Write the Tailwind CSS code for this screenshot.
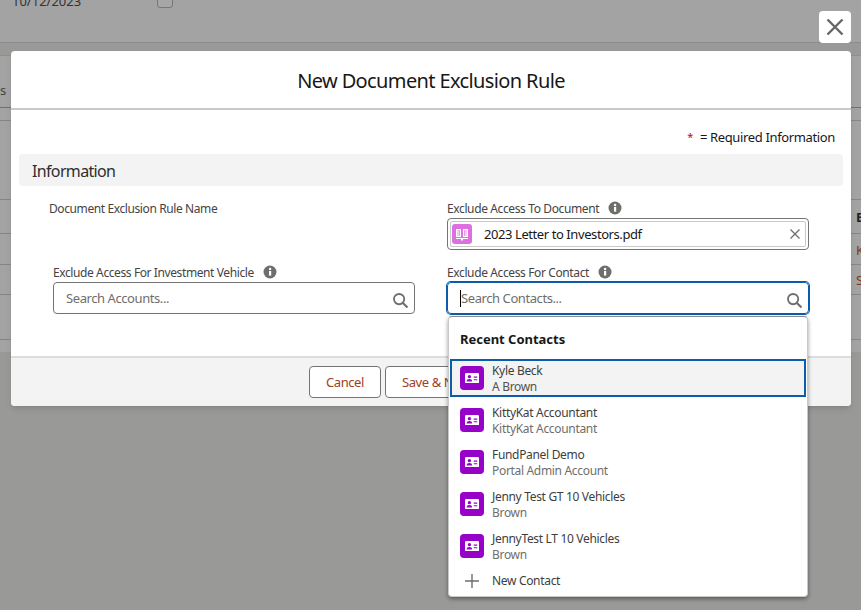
<!DOCTYPE html>
<html lang="en">
<head>
  <meta charset="UTF-8" />
  <meta name="viewport" content="width=device-width, initial-scale=1" />
  <title>New Document Exclusion Rule</title>
  <script src="https://cdn.jsdelivr.net/npm/@tailwindcss/browser@4"></script>
</head>
<body class="relative w-[861px] h-[610px] overflow-hidden bg-[#999998] text-[12px] text-[#181818] font-['Noto_Sans',sans-serif]">

  <!-- page behind the backdrop -->
  <div class="h-[43px] bg-[#a3a3a3] border-b border-[#8c8c8c] pl-[12px] flex items-start gap-[76px] text-[#333]">
    <span class="-mt-[8px] text-[13px]">10/12/2023</span>
    <span class="-mt-[8px] w-[16px] h-[16px] rounded-[3px] border border-[#777] bg-[#a6a6a6]"></span>
  </div>
  <div class="mt-[12px] h-[297px] bg-[#a3a3a3] border-t border-[#8f8f8f] relative flex flex-col text-[13px]">
    <div class="h-[52px] border-b border-[#6f6f6f] flex items-end pb-[7px]">
      <span class="text-[#444]">s</span>
    </div>
    <div class="h-[13px] border-b border-[#858585]"></div>
    <div class="h-[79px] border-b border-[#858585]"></div>
    <div class="h-[34px] border-b border-[#858585] pt-[3px] flex items-center justify-end"><span class="font-bold text-[#222] w-[5px] overflow-hidden">E</span></div>
    <div class="h-[31px] border-b border-[#858585] pt-[3px] flex items-center justify-end"><span class="text-[#7a3a1c] w-[5px] overflow-hidden">K</span></div>
    <div class="h-[30px] border-b border-[#858585] pt-[3px] flex items-center justify-end"><span class="text-[#7a3a1c] w-[5px] overflow-hidden">S</span></div>
    <div class="h-[45px] border-b border-[#858585]"></div>
  </div>

  <!-- close button -->
  <button class="absolute left-[819px] top-[11px] w-[32px] h-[32px] bg-white rounded-[4px] flex items-center justify-center">
    <svg width="18" height="18" viewBox="0 0 18 18" fill="none" stroke="#666" stroke-width="2.4"><path d="M1.5 1.5 16.5 16.5M16.5 1.5 1.5 16.5"/></svg>
  </button>

  <!-- modal -->
  <div class="absolute left-[11px] top-[51px] w-[840px] h-[355px] bg-white rounded-[4px] shadow-md flex flex-col">
    <div class="h-[59px] shrink-0 border-b-2 border-[#c9c9c9] flex items-center justify-center pt-[3px]">
      <h1 class="text-[20px] text-[#181818] tracking-[-0.62px]">New Document Exclusion Rule</h1>
    </div>

    <div class="flex-1">
      <div class="mt-[17px] h-[20px] pr-[16px] pt-[1px] flex items-center justify-end text-[13px] tracking-[-0.36px]">
        <span class="text-[#ba0517] text-[11px] mr-[7px]">*</span><span>= Required Information</span>
      </div>
      <div class="mt-[7px] mx-[8px] h-[32px] bg-[#f3f3f3] rounded-[4px] px-[13px] pt-[2px] flex items-center text-[16px] tracking-[-0.65px] text-[#2e2e2e]">Information</div>

      <div class="pl-[42px] grid grid-cols-[362px_362px] gap-x-[32px]">
        <div class="mt-[14px] h-[16px] pt-[2px] -ml-[4px] flex items-center text-[#444] tracking-[-0.4px]">Document Exclusion Rule Name</div>
        <div class="mt-[14px]">
          <div class="h-[16px] flex items-center text-[#444] tracking-[-0.38px]"><span class="pt-[2px]">Exclude Access To Document</span>
            <svg class="ml-[9px]" width="14" height="14" viewBox="0 0 14 14"><circle cx="7" cy="7" r="6.5" fill="#706e6b"/><rect x="6" y="6" width="2.2" height="4.6" fill="#fff"/><circle cx="7.1" cy="4" r="1.2" fill="#fff"/></svg>
          </div>
          <div class="mt-[2px] h-[32px] border border-[#747474] rounded-[4px] p-[2px]">
            <div class="h-[26px] border border-[#c9c9c9] rounded-[2px] flex items-center pl-[1px] pr-[5px] text-[13px] tracking-[-0.42px]">
              <span class="w-[20px] h-[20px] rounded-[3px] bg-[#dd6fe0] flex items-center justify-center shrink-0">
                <svg width="14" height="14" viewBox="0 0 14 14" fill="#fff"><path d="M1 2h5v8H1zM8 2h5v8H8zM1 11h12v1H8v1.5H6V12H1z"/><path d="M3 3v6M4.5 3v6M9.5 3v6M11 3v6" stroke="#dd6fe0" stroke-width=".7"/></svg>
              </span>
              <span class="ml-[12px] pt-[1px] flex-1">2023 Letter to Investors.pdf</span>
              <svg width="10" height="10" viewBox="0 0 10 10" fill="none" stroke="#706e6b" stroke-width="1.3"><path d="M.5.5l9 9M9.5.5l-9 9"/></svg>
            </div>
          </div>
        </div>

        <div class="mt-[14px]">
          <div class="h-[16px] flex items-center text-[#444] tracking-[-0.4px]"><span class="pt-[2px]">Exclude Access For Investment Vehicle</span>
            <svg class="ml-[9px]" width="14" height="14" viewBox="0 0 14 14"><circle cx="7" cy="7" r="6.5" fill="#706e6b"/><rect x="6" y="6" width="2.2" height="4.6" fill="#fff"/><circle cx="7.1" cy="4" r="1.2" fill="#fff"/></svg>
          </div>
          <div class="mt-[2px] h-[32px] border border-[#747474] rounded-[4px] pl-[12px] pr-[6px] flex items-center">
            <input class="flex-1 min-w-0 pt-[2px] outline-none text-[13px] tracking-[-0.42px] placeholder:text-[#706e6b]" placeholder="Search Accounts..." />
            <svg class="mt-[4px]" width="15" height="15" viewBox="0 0 14 14" fill="none" stroke="#706e6b" stroke-width="1.7"><circle cx="5.7" cy="5.7" r="4.8"/><path d="M9 9l4.5 4.5" stroke-width="2"/></svg>
          </div>
        </div>
        <div class="mt-[14px]">
          <div class="h-[16px] flex items-center text-[#444] tracking-[-0.38px]"><span class="pt-[2px]">Exclude Access For Contact</span>
            <svg class="ml-[9px]" width="14" height="14" viewBox="0 0 14 14"><circle cx="7" cy="7" r="6.5" fill="#706e6b"/><rect x="6" y="6" width="2.2" height="4.6" fill="#fff"/><circle cx="7.1" cy="4" r="1.2" fill="#fff"/></svg>
          </div>
          <div class="relative mt-[2px] h-[32px] border border-[#0b5cab] ring-1 ring-[#0b5cab] rounded-[4px] pl-[13px] pr-[6px] flex items-center">
            <span class="absolute left-[12px] top-[7px] w-[1px] h-[17px] bg-black"></span>
            <input class="flex-1 min-w-0 pt-[2px] outline-none text-[13px] tracking-[-0.42px] placeholder:text-[#706e6b]" placeholder="Search Contacts..." />
            <svg class="mt-[4px]" width="15" height="15" viewBox="0 0 14 14" fill="none" stroke="#706e6b" stroke-width="1.7"><circle cx="5.7" cy="5.7" r="4.8"/><path d="M9 9l4.5 4.5" stroke-width="2"/></svg>
          </div>
        </div>
      </div>
    </div>

    <div class="h-[50px] shrink-0 bg-[#f3f3f3] border-t-2 border-[#dddddd] rounded-b-[4px] flex items-center justify-center gap-[4px] text-[13px] tracking-[-0.42px] text-[#a1401d]">
      <button class="w-[72px] h-[32px] pt-[2px] bg-white border border-[#747474] rounded-[4px]">Cancel</button>
      <button class="w-[95px] h-[32px] pt-[2px] pl-[16px] text-left bg-white border border-[#747474] rounded-[4px]">Save &amp; New</button>
      <button class="w-[69px] h-[32px] pt-[2px] bg-white border border-[#747474] rounded-[4px]">Save</button>
    </div>
  </div>

  <!-- lookup dropdown -->
  <div class="absolute left-[448px] top-[316px] w-[360px] h-[281px] bg-white border border-[#c9c9c9] border-t-[#8a8a8a] rounded-[4px] shadow-[0_2px_4px_rgba(0,0,0,0.4)] px-[1px] text-[12px] tracking-[-0.32px]">
    <div class="h-[42px] pl-[10px] pt-[4px] flex items-center text-[13px] font-bold tracking-[-0.02px] text-[#181818]">Recent Contacts</div>

    <div class="h-[38px] border-2 border-[#0b5cab] bg-[#f3f3f3] pl-[8px] flex items-center gap-[8px]">
      <span class="w-[24px] h-[24px] rounded-[4px] bg-[#9602c7] flex items-center justify-center shrink-0">
        <svg width="14" height="10.5" viewBox="0 0 16 12"><rect width="16" height="12" rx="1.4" fill="#fff"/><circle cx="5" cy="4.2" r="1.9" fill="#9602c7"/><path d="M1.8 9.8c0-2 1.4-2.9 3.2-2.9s3.2.9 3.2 2.9z" fill="#9602c7"/><path d="M10 4h4v1.3h-4zM10 7h4v1.3h-4z" fill="#9602c7"/></svg>
      </span>
      <span class="leading-[16px] pt-[2px]"><span class="block text-[#3e3e3c]">Kyle Beck</span><span class="block text-[#54544f]">A Brown</span></span>
    </div>

    <div class="mt-[2px] h-[42px] pl-[10px] flex items-center gap-[8px]">
      <span class="w-[24px] h-[24px] rounded-[4px] bg-[#9602c7] flex items-center justify-center shrink-0">
        <svg width="14" height="10.5" viewBox="0 0 16 12"><rect width="16" height="12" rx="1.4" fill="#fff"/><circle cx="5" cy="4.2" r="1.9" fill="#9602c7"/><path d="M1.8 9.8c0-2 1.4-2.9 3.2-2.9s3.2.9 3.2 2.9z" fill="#9602c7"/><path d="M10 4h4v1.3h-4zM10 7h4v1.3h-4z" fill="#9602c7"/></svg>
      </span>
      <span class="leading-[16px] pt-[2px]"><span class="block text-[#3e3e3c]">KittyKat Accountant</span><span class="block text-[#706e6b]">KittyKat Accountant</span></span>
    </div>
    <div class="h-[42px] pl-[10px] flex items-center gap-[8px]">
      <span class="w-[24px] h-[24px] rounded-[4px] bg-[#9602c7] flex items-center justify-center shrink-0">
        <svg width="14" height="10.5" viewBox="0 0 16 12"><rect width="16" height="12" rx="1.4" fill="#fff"/><circle cx="5" cy="4.2" r="1.9" fill="#9602c7"/><path d="M1.8 9.8c0-2 1.4-2.9 3.2-2.9s3.2.9 3.2 2.9z" fill="#9602c7"/><path d="M10 4h4v1.3h-4zM10 7h4v1.3h-4z" fill="#9602c7"/></svg>
      </span>
      <span class="leading-[16px] pt-[2px]"><span class="block text-[#3e3e3c]">FundPanel Demo</span><span class="block text-[#706e6b]">Portal Admin Account</span></span>
    </div>
    <div class="h-[42px] pl-[10px] flex items-center gap-[8px]">
      <span class="w-[24px] h-[24px] rounded-[4px] bg-[#9602c7] flex items-center justify-center shrink-0">
        <svg width="14" height="10.5" viewBox="0 0 16 12"><rect width="16" height="12" rx="1.4" fill="#fff"/><circle cx="5" cy="4.2" r="1.9" fill="#9602c7"/><path d="M1.8 9.8c0-2 1.4-2.9 3.2-2.9s3.2.9 3.2 2.9z" fill="#9602c7"/><path d="M10 4h4v1.3h-4zM10 7h4v1.3h-4z" fill="#9602c7"/></svg>
      </span>
      <span class="leading-[16px] pt-[2px]"><span class="block text-[#3e3e3c]">Jenny Test GT 10 Vehicles</span><span class="block text-[#706e6b]">Brown</span></span>
    </div>
    <div class="h-[42px] pl-[10px] flex items-center gap-[8px]">
      <span class="w-[24px] h-[24px] rounded-[4px] bg-[#9602c7] flex items-center justify-center shrink-0">
        <svg width="14" height="10.5" viewBox="0 0 16 12"><rect width="16" height="12" rx="1.4" fill="#fff"/><circle cx="5" cy="4.2" r="1.9" fill="#9602c7"/><path d="M1.8 9.8c0-2 1.4-2.9 3.2-2.9s3.2.9 3.2 2.9z" fill="#9602c7"/><path d="M10 4h4v1.3h-4zM10 7h4v1.3h-4z" fill="#9602c7"/></svg>
      </span>
      <span class="leading-[16px] pt-[2px]"><span class="block text-[#3e3e3c]">JennyTest LT 10 Vehicles</span><span class="block text-[#706e6b]">Brown</span></span>
    </div>
    <div class="h-[28px] pl-[15px] flex items-center gap-[13px] text-[#3e3e3c]">
      <svg width="14" height="14" viewBox="0 0 14 14" stroke="#706e6b" stroke-width="1.4"><path d="M7 0v14M0 7h14"/></svg>
      <span>New Contact</span>
    </div>
  </div>

</body>
</html>
